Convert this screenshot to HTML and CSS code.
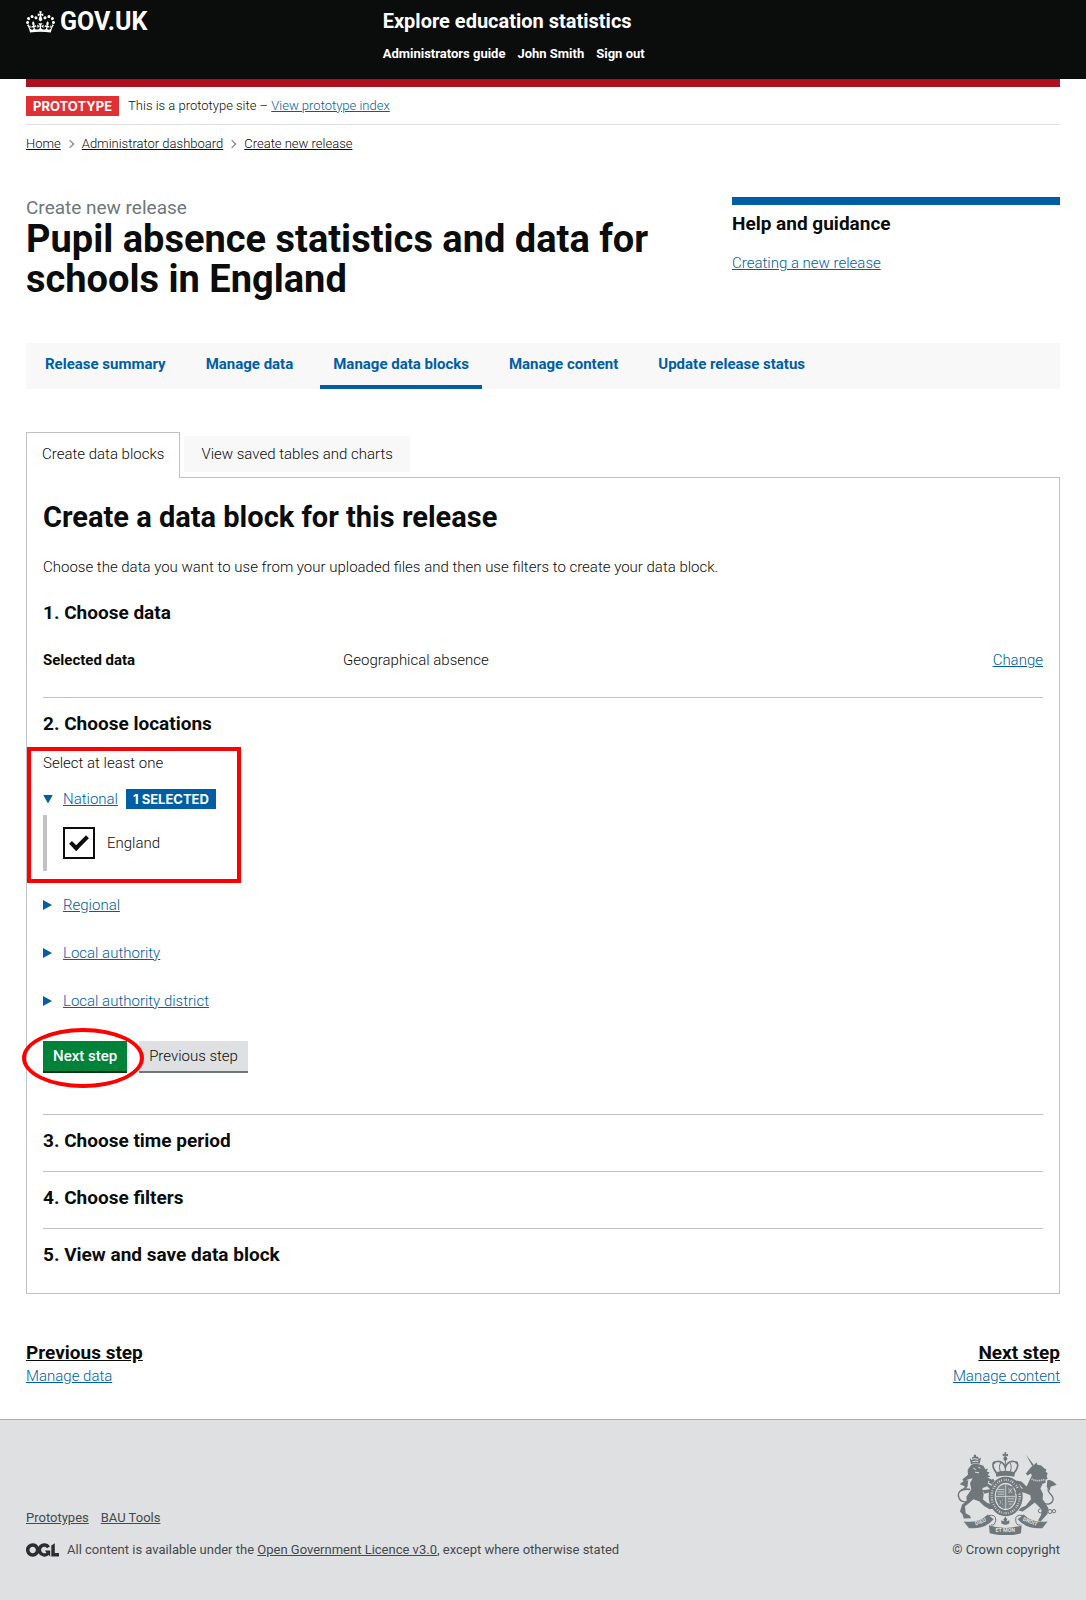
FILE: index.html
```html
<!DOCTYPE html>
<html lang="en">
<head>
<meta charset="utf-8">
<meta name="viewport" content="width=device-width, initial-scale=1">
<title>Create new release - Explore education statistics</title>
<link rel="stylesheet" href="styles.css">
</head>
<body>
<header class="header">
  <div class="container header-grid">
    <a class="logo" href="#">
      <svg class="crown" viewBox="0 0 132 97" aria-hidden="true"><path fill="currentColor" fill-rule="evenodd" d="M25 30.2c3.5 1.5 7.7-.2 9.1-3.7 1.5-3.6-.2-7.8-3.9-9.2-3.6-1.4-7.6.3-9.1 3.9-1.4 3.5.3 7.5 3.9 9zM9 39.5c3.6 1.5 7.8-.2 9.2-3.7 1.5-3.6-.2-7.8-3.9-9.1-3.6-1.5-7.6.2-9.1 3.8-1.4 3.5.3 7.5 3.8 9zM4.4 57.2c3.5 1.5 7.7-.2 9.1-3.8 1.5-3.6-.2-7.7-3.9-9.1-3.5-1.5-7.6.3-9.1 3.8-1.4 3.5.3 7.6 3.9 9.1zm38.3-21.4c3.5 1.5 7.7-.2 9.1-3.8 1.5-3.6-.2-7.7-3.9-9.1-3.6-1.5-7.6.3-9.1 3.8-1.3 3.6.4 7.7 3.9 9.1zm64.4-5.6c-3.6 1.5-7.8-.2-9.1-3.7-1.5-3.6.2-7.8 3.8-9.2 3.6-1.4 7.7.3 9.2 3.9 1.3 3.5-.4 7.5-3.9 9zm15.9 9.3c-3.6 1.5-7.7-.2-9.1-3.7-1.5-3.6.2-7.8 3.7-9.1 3.6-1.5 7.7.2 9.2 3.8 1.5 3.5-.3 7.5-3.8 9zm4.7 17.7c-3.6 1.5-7.8-.2-9.2-3.8-1.5-3.6.2-7.7 3.9-9.1 3.6-1.5 7.7.3 9.2 3.8 1.3 3.5-.4 7.6-3.9 9.1zM89.3 35.8c-3.6 1.5-7.8-.2-9.2-3.8-1.4-3.6.2-7.7 3.9-9.1 3.6-1.5 7.7.3 9.2 3.8 1.4 3.6-.3 7.7-3.9 9.1zM69.7 17.7l8.9 4.7V9.3l-8.9 2.8c-.2-.3-.5-.6-.9-.9L72.4 0H59.6l3.5 11.2c-.3.3-.6.5-.9.9l-8.8-2.8v13.1l8.8-4.7c.3.3.6.7.9.9l-5 15.4v.1c-.2.8-.4 1.6-.4 2.4 0 4.1 3.1 7.5 7 8.1h.2c.3 0 .7.1 1 .1.4 0 .7 0 1-.1h.2c4-.6 7.1-4.1 7.1-8.1 0-.8-.1-1.7-.4-2.4V34l-5.1-15.4c.4-.2.7-.6 1-.9zM66 92.8c16.9 0 32.8 1.1 47.1 3.2 4-16.9 8.9-26.7 14-33.5l-9.6-3.4c1 4.9 1.1 7.2 0 10.2-1.5-1.4-3-4.3-4.2-8.7L108.6 76c2.8-2 5-3.2 7.5-3.3-4.4 9.4-10 11.9-13.6 11.2-4.3-.8-6.3-4.6-5.6-7.9 1-4.7 5.7-5.9 8-.5 4.3-8.7-3-11.4-7.6-8.8 7.1-7.2 7.9-13.5 2.1-21.1-8 6.1-8.1 12.3-4.5 20.8-4.7-5.4-12.1-2.5-9.5 6.2 3.4-5.2 7.9-2 7.2 3.1-.6 4.3-6.4 7.8-13.5 7.2-10.3-.9-10.9-8-11.2-13.8 2.5-.5 7.1 1.8 11 7.3L80.2 60c-4.1 4.4-8 5.3-12.3 5.4 1.4-4.4 8-11.6 8-11.6H55.5s6.4 7.2 7.9 11.6c-4.2-.1-8-1-12.3-5.4l1.4 16.4c3.9-5.5 8.5-7.7 10.9-7.3-.3 5.8-.9 12.8-11.1 13.8-7.2.6-12.9-2.9-13.5-7.2-.7-5 3.8-8.3 7.1-3.1 2.7-8.7-4.6-11.6-9.4-6.2 3.7-8.5 3.6-14.7-4.6-20.8-5.8 7.6-5 13.9 2.2 21.1-4.7-2.6-11.9.1-7.7 8.8 2.3-5.5 7.1-4.2 8.1.5.7 3.3-1.3 7.1-5.7 7.9-3.5.7-9-1.8-13.5-11.2 2.5.1 4.7 1.3 7.5 3.3l-4.7-15.4c-1.2 4.4-2.7 7.2-4.3 8.7-1.1-3-.9-5.3 0-10.2l-9.5 3.4c5 6.9 9.9 16.7 14 33.5 14.8-2.1 30.8-3.2 47.7-3.2z"/></svg>
      <span>GOV.UK</span>
    </a>
    <div>
      <a class="service-name" href="#">Explore education statistics</a>
      <nav class="header-nav" aria-label="Account">
        <a href="#">Administrators guide</a>
        <a href="#">John Smith</a>
        <a href="#">Sign out</a>
      </nav>
    </div>
  </div>
</header>

<div class="container">
  <div class="phase-banner">
    <strong class="tag tag-red">PROTOTYPE</strong>
    <span>This is a prototype site – <a class="link" href="#">View prototype index</a></span>
  </div>
  <nav aria-label="Breadcrumb">
    <ol class="breadcrumbs">
      <li><a href="#">Home</a></li>
      <li><a href="#">Administrator dashboard</a></li>
      <li><a href="#">Create new release</a></li>
    </ol>
  </nav>

  <main>
    <div class="title-row">
      <h1><span class="caption">Create new release</span>Pupil absence statistics and data for schools in England</h1>
      <aside class="help">
        <h2 class="heading-s">Help and guidance</h2>
        <a class="link" href="#">Creating a new release</a>
      </aside>
    </div>

    <nav class="release-nav" aria-label="Release">
      <a href="#">Release summary</a>
      <a href="#">Manage data</a>
      <a href="#" class="current" aria-current="page">Manage data blocks</a>
      <a href="#">Manage content</a>
      <a href="#">Update release status</a>
    </nav>

    <div class="tabs">
      <a class="tab selected" href="#create">Create data blocks</a>
      <a class="tab" href="#saved">View saved tables and charts</a>
    </div>
    <section class="panel" id="create">
      <h2 class="heading-l">Create a data block for this release</h2>
      <p class="intro">Choose the data you want to use from your uploaded files and then use filters to create your data block.</p>

      <section class="step step-data">
        <h3 class="heading-s">1. Choose data</h3>
        <dl class="summary">
          <dt>Selected data</dt>
          <dd>Geographical absence</dd>
          <dd><a class="link" href="#">Change</a></dd>
        </dl>
      </section>

      <section class="step step-locations">
        <h3 class="heading-s">2. Choose locations</h3>
        <form class="locations">
          <div class="marked-box">
            <p class="hint">Select at least one</p>
            <details open>
              <summary><span class="link">National</span><strong class="tag tag-blue">1 SELECTED</strong></summary>
              <div class="options">
                <input type="checkbox" id="england" checked>
                <label for="england">England</label>
              </div>
            </details>
          </div>
          <details><summary><span class="link">Regional</span></summary></details>
          <details><summary><span class="link">Local authority</span></summary></details>
          <details><summary><span class="link">Local authority district</span></summary></details>
          <div class="buttons">
            <span class="marked-oval"><button type="button" class="button">Next step</button></span>
            <button type="button" class="button button-grey">Previous step</button>
          </div>
        </form>
      </section>

      <section class="step"><h3 class="heading-s">3. Choose time period</h3></section>
      <section class="step"><h3 class="heading-s">4. Choose filters</h3></section>
      <section class="step"><h3 class="heading-s">5. View and save data block</h3></section>
    </section>

    <nav class="pager" aria-label="Steps">
      <a href="#"><span class="pager-title">Previous step</span><span class="link">Manage data</span></a>
      <a href="#" class="pager-next"><span class="pager-title">Next step</span><span class="link">Manage content</span></a>
    </nav>
  </main>
</div>

<footer class="footer">
  <div class="container footer-row">
    <div>
      <div class="footer-links"><a href="#">Prototypes</a><a href="#">BAU Tools</a></div>
      <div class="licence">
        <svg class="ogl" viewBox="0 0 483.2 195.7" role="img" aria-label="Open Government Licence"><path fill="currentColor" d="M421.5 142.8V.1l-50.7 32.3v161.1h112.4v-50.7zm-122.3-9.6A47.12 47.12 0 0 1 221 97.8c0-26 21.1-47.1 47.1-47.1 16.7 0 31.4 8.7 39.7 21.8l42.7-27.2A97.63 97.63 0 0 0 268.1 0c-36.5 0-68.3 20.1-85.1 49.7A98 98 0 0 0 97.8 0C43.9 0 0 43.9 0 97.8s43.9 97.8 97.8 97.8c36.5 0 68.3-20.1 85.1-49.7a97.76 97.76 0 0 0 149.6 25.4l19.4 22.2h3v-87.8h-80l24.3 27.5zM97.8 145c-26 0-47.1-21.1-47.1-47.1s21.1-47.1 47.1-47.1 47.1 21.1 47.1 47.1S123.8 145 97.8 145"/></svg>
        <span>All content is available under the <a href="#">Open Government Licence v3.0</a>, except where otherwise stated</span>
      </div>
    </div>
    <a class="copyright" href="#">
      <svg class="crest" viewBox="81 68 303 248" aria-hidden="true">
        <!-- crown over the shield -->
        <g fill="none" stroke="#6f777b" stroke-width="5">
          <path d="M204 132C190 116 186 98 203 96c14-2 22 6 26 18 4-12 12-20 26-18 17 2 13 20-1 36"/>
          <path d="M216 130c-6-12-6-22-1-30M242 130c6-12 6-22 1-30M229 92v40" stroke-width="3"/>
        </g>
        <g fill="#6f777b">
          <path d="M200 128q29-9 58 0l-2 14q-27-7-54 0z"/>
          <circle cx="229" cy="88" r="6"/>
          <path d="M226 68h6l-1 6 6-1v7l-6-1 1 7h-6l1-7-6 1v-7l6 1z"/>
          <circle cx="195" cy="100" r="4"/><circle cx="263" cy="100" r="4"/>
        </g>
        <!-- garter and quartered shield -->
        <ellipse cx="230" cy="201" rx="42" ry="50" fill="none" stroke="#6f777b" stroke-width="18"/>
        <ellipse cx="230" cy="201" rx="42" ry="50" fill="none" stroke="#dee0e2" stroke-width="7" stroke-dasharray="2 4 3 4 2 6"/>
        <ellipse cx="230" cy="201" rx="30" ry="37" fill="#7f878a"/>
        <g fill="none" stroke="#dee0e2" stroke-width="2">
          <path d="M230 164v74M200 201h60M206 180h20M205 187h21M207 194h19M236 208h19M238 216h16M240 224h10"/>
          <path d="M237 176l14 16m0-16l-14 16M210 210l12 16m0-16l-12 16"/>
        </g>
        <g fill="none" stroke="#6f777b" stroke-width="3"><path d="M236 172h16v22h-16zM210 208v20M217 208v22M223 208v20"/></g>
        <!-- lion -->
        <g fill="#6f777b">
          <path d="M122 86l5 4 3-7 5-2-1-5h7l0 5 6 1 3 6 6-4-4 19q-13-4-26 1z"/>
          <path d="M127 106q12-6 25-1l11 4 6 10 8-2-4 9 9 3-6 7 8 6-9 3 12 4 3 9-12-4-2 8 10 6 1 14-13-12-14 6 4 18-2 16 12 10 20 8 3 9-15 2-16-9-16-15-17-6-13 12-12 9 2 21 13 8 3 7-22 1-3-12-8-9 6-20 14-12-1-12 15-22-4-19 8-15-15 4-11 8-5-8 17-14-1-15z"/>
          <path d="M178 158l14-10 5 5-8 12zM160 182l24-3 3 8-20 6z"/>
        </g>
        <g fill="none" stroke="#6f777b" stroke-width="4">
          <path d="M120 216q-30 6-32-20c0-18 25-14 26-30"/>
          <path d="M124 180q-18-4-30 4" stroke-width="5"/>
        </g>
        <path fill="#6f777b" d="M92 164q12-12 26-12l-3 20-9 10 1-12z"/>
        <path d="M133 116l7 4M148 113l6 3M138 128l12 2M126 90q10-5 22 0M130 97q9-3 18-1" stroke="#dee0e2" stroke-width="3" fill="none"/>
        <!-- unicorn -->
        <g fill="#6f777b">
          <path d="M291 76l23 30-4 4z"/>
          <path d="M305 114l12-10 6-6 2 8 12 2 8 8 7 3-2 7 6 6-3 8 3 8-7 3 1 9-9 3-7 14 8 16-1 16 9 13 9 16-8 20-16 18-8-3 9-16 3-16-12-12-10-10-16 13-20 14-13-3 8-8 14-6 16-20-2-12-14-6-17-5-7 10-7-6 7-14 16 2-10-13-18-4 1-9 22 4 16 15 8-18 8-16-4-5-9 6-6-5z"/>
        </g>
        <g fill="none" stroke="#6f777b" stroke-width="4">
          <path d="M336 218q30 14 36-6c4-18-20-20-14-36"/>
          <circle cx="334" cy="244" r="6" stroke-width="3"/><circle cx="349" cy="250" r="6" stroke-width="3"/><circle cx="363" cy="246" r="6" stroke-width="3"/><circle cx="375" cy="245" r="5" stroke-width="3"/>
        </g>
        <path fill="#6f777b" d="M383 166q-14-16-28-14l-2 20 9 12 3-12z"/>
        <path d="M308 148q16 10 38 2" stroke="#dee0e2" stroke-width="5" fill="none" stroke-dasharray="3 3"/>
        <!-- motto ribbon -->
        <g fill="#6f777b">
          <path d="M104 276q46 6 72-21l18 14q-26 31-74 27z"/>
          <path d="M356 276q-46 6-72-21l-18 14q26 31 74 27z"/>
          <path d="M180 287q50 17 98 0l-2 24q-46 13-94 0z"/>
          <path d="M229 262l6 8-3 6 9-4v10l-9 4h-6l-9-4v-10l9 4-3-6z"/>
        </g>
        <path d="M178 258q24-4 22 14t-14 14M282 258q-24-4-22 14t14 14" fill="none" stroke="#6f777b" stroke-width="3"/>
        <g class="motto">
          <text transform="rotate(-22 154 276)" x="154" y="282">DIEU</text>
          <text x="229" y="308">ET MON</text>
          <text transform="rotate(22 304 276)" x="304" y="282">DROIT</text>
        </g>
      </svg>
      <span>© Crown copyright</span>
    </a>
  </div>
</footer>
</body>
</html>
```
FILE: styles.css
```css
* { box-sizing: border-box; }

body {
  margin: 0;
  background: #fff;
  color: #0b0c0c;
  font-family: Roboto, "Liberation Sans", sans-serif;
  font-size: 15px;
  font-weight: 300;
  line-height: 24px;
}

h1, h2, h3, p, dl, dd, ol { margin: 0; padding: 0; }
a { color: inherit; }
.link { color: #005ea5; text-decoration: underline; }
.container { padding: 0 26px; }

.heading-s { font-size: 19px; line-height: 24px; }
.heading-l { font-size: 29px; line-height: 32px; }

/* Header */
.header { background: #0b0c0c; color: #fff; font-weight: 700; }
.header a { text-decoration: none; }
.header-grid {
  display: grid;
  grid-template-columns: 1fr 2fr;
  gap: 18px;
  min-height: 79px;
  padding-top: 9px;
}
.logo { display: flex; gap: 5px; align-items: center; height: 26px; font-size: 25px; }
.crown { width: 29px; height: 22px; }
.service-name { display: block; font-size: 20px; line-height: 24px; }
.header-nav { display: flex; gap: 12px; margin-top: 9px; font-size: 13px; }

/* Phase banner and breadcrumbs */
.phase-banner {
  display: flex;
  gap: 9px;
  align-items: center;
  height: 46px;
  border-top: 8px solid #b10e1e;
  border-bottom: 1px solid #dee0e2;
  font-size: 13px;
}
.tag {
  padding: 0 7px;
  color: #fff;
  font-family: Inter, sans-serif;
  font-size: 13px;
  font-weight: 700;
  line-height: 20px;
}
.tag-red { background: #df3034; }
.tag-blue { background: #005ea5; }
.breadcrumbs { display: flex; margin-top: 7px; list-style: none; font-size: 13px; }
.breadcrumbs li { display: flex; align-items: center; }
.breadcrumbs li + li::before {
  content: "";
  width: 5px;
  height: 5px;
  margin: 0 9px 0 6px;
  border: solid #6f777b;
  border-width: 1px 1px 0 0;
  transform: rotate(45deg);
}

/* Title */
.title-row { display: grid; grid-template-columns: 2fr 1fr; gap: 50px; margin-top: 41px; }
h1 { font-size: 38px; line-height: 40px; }
.caption { display: block; color: #6f777b; font-size: 19px; font-weight: 400; line-height: 22px; }
.help { padding-top: 7px; border-top: 8px solid #005ea5; }
.help .heading-s { margin-bottom: 15px; }

/* Release navigation */
.release-nav { display: flex; margin-top: 44px; padding: 0 6px; background: #f8f8f8; }
.release-nav a {
  margin-right: 14px;
  padding: 9px 13px;
  border-bottom: 4px solid transparent;
  color: #005ea5;
  font-weight: 700;
  text-decoration: none;
}
.release-nav .current { border-color: #005ea5; }

/* Tabs */
.tabs { display: flex; gap: 4px; margin-top: 43px; }
.tab { margin: 4px 0 5px; padding: 6px 17px; background: #f8f8f8; text-decoration: none; }
.tab.selected {
  position: relative;
  margin: 0 0 -1px;
  padding: 9px 15px 12px;
  border: 1px solid #bfc1c3;
  border-bottom: 0;
  background: #fff;
}
.panel { padding: 23px 16px 24px; border: 1px solid #bfc1c3; }
.intro { margin: 22px 0; }
.step + .step { padding-top: 14px; border-top: 1px solid #bfc1c3; }
.step + .step:not(.step-locations) { min-height: 57px; }
.step:last-child { margin-bottom: -16px; }
.summary { display: grid; grid-template-columns: 3fr 6fr 1fr; margin-top: 23px; padding-bottom: 25px; }
.summary dt { font-weight: 700; }
.summary dd:last-child { text-align: right; }

/* Locations */
.marked-box { position: relative; width: 200px; margin-top: 15px; }
.marked-box::before {
  content: "";
  position: absolute;
  inset: -4px 2px -12px -16px;
  border: 4px solid #f00;
  pointer-events: none;
}
.marked-oval { position: relative; }
.marked-oval::before {
  content: "";
  position: absolute;
  inset: -13px -17px -15px -21px;
  border: 4px solid #f00;
  border-radius: 50%;
  pointer-events: none;
}
summary { display: flex; align-items: center; list-style: none; cursor: pointer; }
summary::before {
  content: "";
  width: 9px;
  height: 10px;
  margin-right: 11px;
  background: #005ea5;
  clip-path: polygon(0 0, 100% 50%, 0 100%);
}
details[open] summary::before {
  width: 10px;
  height: 9px;
  margin-right: 10px;
  clip-path: polygon(0 0, 100% 0, 50% 100%);
}
summary .tag { margin-left: 8px; }
.marked-box details { margin-top: 12px; }
.locations > details { margin-top: 24px; }
.marked-box + details { margin-top: 22px; }
.options {
  display: flex;
  gap: 12px;
  align-items: center;
  height: 56px;
  margin-top: 4px;
  padding-left: 16px;
  border-left: 4px solid #bfc1c3;
}
.options input {
  display: grid;
  place-items: center;
  appearance: none;
  width: 32px;
  height: 32px;
  margin: 0;
  border: 2px solid #0b0c0c;
}
.options input:checked::after {
  content: "";
  width: 14px;
  height: 6px;
  margin-bottom: 5px;
  border: solid #0b0c0c;
  border-width: 0 0 4px 4px;
  transform: rotate(-45deg);
}
.buttons { display: flex; gap: 12px; margin: 28px 0 41px; }
.button {
  padding: 3px 10px;
  border: 0;
  border-bottom: 2px solid #003618;
  background: #00823b;
  color: #fff;
  font: inherit;
  font-weight: 500;
}
.button-grey { border-color: #6f777b; background: #dee0e2; color: #0b0c0c; font-weight: 300; }

/* Previous and next */
.pager { display: flex; justify-content: space-between; margin: 47px 0 32px; }
.pager a { display: grid; line-height: 22px; text-decoration: none; }
.pager-title { font-size: 19px; font-weight: 700; line-height: 24px; text-decoration: underline; }
.pager-next { text-align: right; }

/* Footer */
.footer {
  padding: 32px 0 38px;
  border-top: 1px solid #a1acb2;
  background: #dee0e2;
  color: #454a4d;
  font-size: 13px;
  font-weight: 400;
}
.footer-row { display: flex; justify-content: space-between; align-items: flex-end; }
.footer-links { display: flex; gap: 12px; margin-bottom: 8px; }
.licence { display: flex; gap: 8px; align-items: center; }
.ogl { width: 33px; height: 14px; color: #2b2e30; }
.copyright { display: grid; justify-items: center; text-decoration: none; }
.crest { width: 101px; height: 83px; margin-bottom: 3px; }
.motto { fill: #dee0e2; font-family: Roboto, sans-serif; font-size: 16px; font-weight: 700; text-anchor: middle; }
```
